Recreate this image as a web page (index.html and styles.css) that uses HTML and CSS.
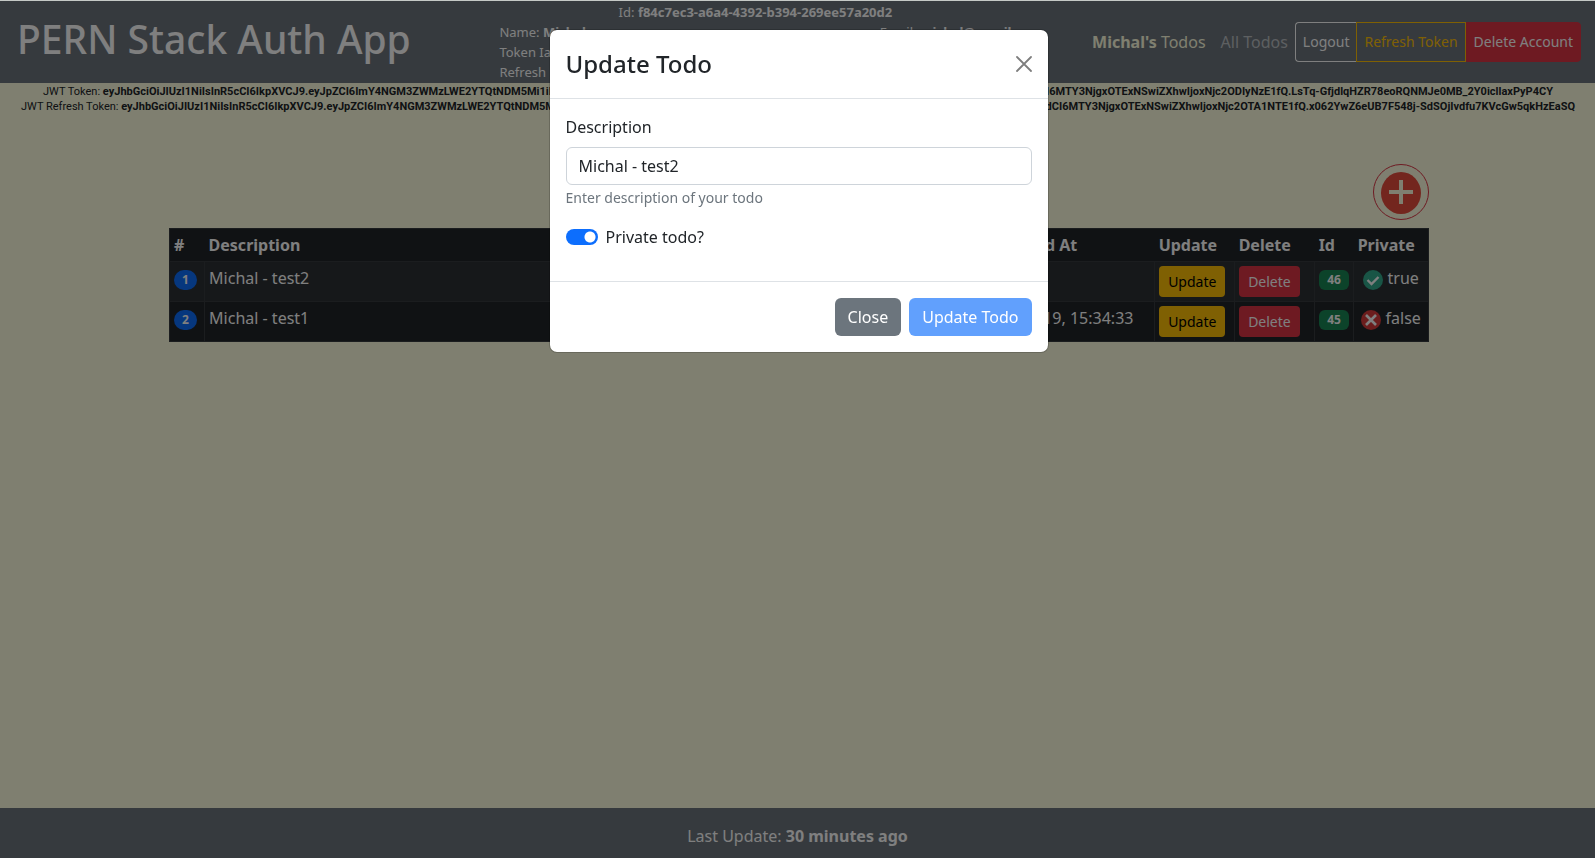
FILE: index.html
```html
<!DOCTYPE html>
<html lang="en">
<head>
<meta charset="utf-8">
<title>PERN Stack Auth App</title>
<link rel="stylesheet" href="styles.css">
</head>
<body>
<div class="page">
  <header class="header">
    <h1 class="brand">PERN Stack Auth App</h1>
    <div class="info">
      <div class="info-id">Id: <b>f84c7ec3-a6a4-4392-b394-269ee57a20d2</b></div>
      <div>Name: <b>Michal</b></div>
      <div>Email: <b>michal@gmail</b></div>
      <div class="info-wide">Token Iat:</div>
      <div class="info-wide">Refresh</div>
    </div>
    <nav class="nav">
      <a class="nav-link active" href="#"><b>Michal's</b> Todos</a>
      <a class="nav-link" href="#">All Todos</a>
      <div class="btn-group">
        <button type="button" class="group-btn logout">Logout</button>
        <button type="button" class="group-btn refresh">Refresh Token</button>
        <button type="button" class="group-btn remove">Delete Account</button>
      </div>
    </nav>
  </header>

  <section class="tokens">
    <div class="token access">
      <span>JWT Token: <b>eyJhbGciOiJIUzI1NiIsInR5cCI6IkpXVCJ9.eyJpZCI6ImY4NGM3ZWMzLWE2YTQtNDM5Mi1iMzk0</b></span>
      <b>iaWF0CI6MTY3NjgxOTExNSwiZXhwIjoxNjc2ODIyNzE1fQ.LsTq-GfjdlqHZR78eoRQNMJe0MB_2Y0icllaxPyP4CY</b>
    </div>
    <div class="token">
      <span>JWT Refresh Token: <b>eyJhbGciOiJIUzI1NiIsInR5cCI6IkpXVCJ9.eyJpZCI6ImY4NGM3ZWMzLWE2YTQtNDM5Mi1iMzk0</b></span>
      <b>IjoiaWhdCI6MTY3NjgxOTExNSwiZXhwIjoxNjc2OTA1NTE1fQ.x062YwZ6eUB7F548j-SdSOjIvdfu7KVcGw5qkHzEaSQ</b>
    </div>
  </section>

  <main class="content">
    <button type="button" class="add" aria-label="Add todo">
      <svg width="40" height="42" viewBox="0 0 40 42" aria-hidden="true">
        <ellipse cx="20" cy="21" rx="20" ry="21" fill="#e74c3c"/>
        <path d="M18 8h4v10h10v4H22v10h-4V22H8v-4h10z" fill="#ffffe0"/>
      </svg>
    </button>
    <table class="todos">
      <colgroup><col class="c-num"><col><col class="c-date"><col class="c-date"><col class="c-act"><col class="c-act"><col class="c-id"><col class="c-priv"></colgroup>
      <thead>
        <tr><th>#</th><th>Description</th><th>Created At</th><th>Updated At</th><th>Update</th><th>Delete</th><th>Id</th><th>Private</th></tr>
      </thead>
      <tbody>
        <tr>
          <td><span class="badge pill">1</span></td>
          <td>Michal - test2</td>
          <td></td>
          <td></td>
          <td><button type="button" class="btn-sm warn">Update</button></td>
          <td><button type="button" class="btn-sm danger">Delete</button></td>
          <td><span class="badge green">46</span></td>
          <td class="private"><svg width="20" height="20" viewBox="0 0 20 20" aria-hidden="true"><circle cx="10" cy="10" r="10" fill="#32aa8c"/><path d="M4.500 10l4 4 7-7" fill="none" stroke="#fff" stroke-width="2.400"/></svg> true</td>
        </tr>
        <tr>
          <td><span class="badge pill">2</span></td>
          <td>Michal - test1</td>
          <td></td>
          <td>2023-2-19, 15:34:33</td>
          <td><button type="button" class="btn-sm warn">Update</button></td>
          <td><button type="button" class="btn-sm danger">Delete</button></td>
          <td><span class="badge green">45</span></td>
          <td class="private"><svg width="20" height="20" viewBox="0 0 20 20" aria-hidden="true"><circle cx="10" cy="10" r="10" fill="#d63a3a"/><path d="M5 5l10 10M15 5L5 15" fill="none" stroke="#fff" stroke-width="2.600"/></svg> false</td>
        </tr>
      </tbody>
    </table>
  </main>

  <footer class="footer">Last Update: <b>30 minutes ago</b></footer>
</div>

<div class="backdrop"></div>
<div class="overlay">
  <form class="modal" role="dialog" aria-labelledby="modal-title">
    <div class="modal-header">
      <h2 class="modal-title" id="modal-title">Update Todo</h2>
      <button type="button" class="close" aria-label="Close dialog">
        <svg width="16" height="16" viewBox="0 0 16 16" aria-hidden="true"><path d="M1 1l14 14M15 1L1 15" fill="none" stroke="#000" stroke-width="1.800" stroke-linecap="round"/></svg>
      </button>
    </div>
    <div class="modal-body">
      <label class="label" for="description">Description</label>
      <input class="text" id="description" type="text" value="Michal - test2">
      <div class="hint">Enter description of your todo</div>
      <div class="check">
        <input class="switch" id="private" type="checkbox" role="switch" checked>
        <label for="private">Private todo?</label>
      </div>
    </div>
    <div class="modal-footer">
      <button type="button" class="btn secondary">Close</button>
      <button type="submit" class="btn primary" disabled>Update Todo</button>
    </div>
  </form>
</div>
</body>
</html>
```
FILE: styles.css
```css
* { box-sizing: border-box; }
body {
  margin: 0;
  background: #ffffe0;
  color: #212529;
  font: 16px/24px "Noto Sans", sans-serif;
}
button, input { font: inherit; margin: 0; }
h1, h2 { margin: 0; }
svg { display: block; }

.page {
  min-height: 100vh;
  display: flex;
  flex-direction: column;
  border-top: 1px solid #c5c9c6;
}
.header {
  display: flex;
  align-items: center;
  justify-content: space-between;
  padding: 1px 14px 1px 17px;
  background: #6c757d;
  color: #fff;
  white-space: nowrap;
}
.brand { font-size: 39px; line-height: 48px; font-weight: 500; padding-bottom: 6px; }
.info {
  display: grid;
  grid-template-columns: 3fr 1fr;
  width: 512px;
  margin-left: 8px;
  font-size: 13px;
  line-height: 20px;
}
.info-id { grid-column: 1 / -1; text-align: center; }
.info-wide { grid-column: 1 / -1; }
.nav { display: flex; align-items: center; gap: 15px; }
.nav-link { color: rgba(255, 255, 255, .55); text-decoration: none; }
.nav-link.active { color: #ffffe0; }
.btn-group { display: flex; margin-left: -8px; }
.group-btn {
  height: 40px;
  padding: 0 7px;
  border: 1px solid #fff;
  background: transparent;
  color: #fff;
  font-size: 14px;
}
.logout { border-radius: 4px 0 0 4px; border-right: 0; }
.refresh { border-color: #ffc107; color: #ffc107; }
.remove { border-color: #dc3545; background: #dc3545; border-radius: 0 4px 4px 0; }

.tokens { font: 11px/15px Roboto, sans-serif; padding: 1px 20px 0 21px; }
.token { display: flex; justify-content: space-between; white-space: nowrap; }
.access { padding: 0 22px; }

.content {
  width: 79%;
  margin: 50px 10.400% 0 auto;
  display: flex;
  flex-direction: column;
  flex: 1;
}
.add {
  align-self: flex-end;
  display: grid;
  place-items: center;
  width: 56px;
  height: 56px;
  margin-bottom: 8px;
  padding: 2px 0 0;
  border: 1px solid #dc3545;
  border-radius: 50%;
  background: none;
}
.todos {
  width: 100%;
  table-layout: fixed;
  border-collapse: collapse;
  background: #212529;
  color: #fff;
  border: 1px solid #373b3e;
}
.c-num { width: 35px; }
.c-date { width: 172px; }
.c-act { width: 80px; }
.c-id { width: 39px; }
.c-priv { width: 75px; }
.todos th { padding: 4px; text-align: left; font-weight: 700; white-space: nowrap; }
.todos td {
  height: 40px;
  padding: 4px;
  border: 1px solid #373b3e;
  vertical-align: top;
  white-space: nowrap;
}
.todos tbody tr:first-child { background: #2c3034; }
.badge {
  display: inline-block;
  padding: 4px 7px;
  font-size: 12px;
  line-height: 12px;
  font-weight: 700;
  border-radius: 6px;
  vertical-align: middle;
}
.pill { padding: 4px 8px; border-radius: 10px; background: #0d6efd; }
.green { padding: 4px 8px; background: #198754; }
.btn-sm {
  display: block;
  padding: 4px 8px;
  border: 1px solid transparent;
  border-radius: 4px;
  font-size: 14px;
  line-height: 21px;
}
.warn { background: #ffc107; color: #000; }
.danger { background: #dc3545; color: #fff; }
.todos .private { text-align: center; }
.private svg { display: inline-block; vertical-align: middle; }

.footer {
  padding: 16px 0 10px;
  background: #6c757d;
  color: #fff;
  text-align: center;
}

.backdrop { position: fixed; inset: 1px 0 0; background: rgba(0, 0, 0, .5); }
.overlay { position: fixed; inset: 0; padding: 29px 14px 29px 16px; }
.modal {
  max-width: 500px;
  margin: 0 auto;
  border: 1px solid rgba(0, 0, 0, .175);
  border-radius: 8px;
  background: #fff;
  background-clip: padding-box;
}
.modal-header {
  display: flex;
  align-items: center;
  justify-content: space-between;
  padding: 16px;
  border-bottom: 1px solid #dee2e6;
}
.modal-title { font-size: 24px; line-height: 36px; font-weight: 500; }
.close { padding: 0; border: 0; background: none; opacity: .5; }
.modal-body { padding: 16px 16px 32px; }
.label { display: block; margin-bottom: 8px; }
.text {
  display: block;
  width: 100%;
  height: 38px;
  padding: 6px 12px;
  border: 1px solid #ced4da;
  border-radius: 6px;
  background: #fff;
  color: #212529;
}
.hint { margin: 2px 0 17px; color: #6c757d; font-size: 14px; line-height: 21px; }
.check { display: flex; align-items: center; gap: 8px; }
.switch {
  appearance: none;
  width: 32px;
  height: 16px;
  border-radius: 8px;
  background: radial-gradient(circle at 24px 8px, #fff 5px, #0d6efd 6px);
}
.modal-footer {
  display: flex;
  justify-content: flex-end;
  gap: 8px;
  padding: 16px;
  border-top: 1px solid #dee2e6;
}
.btn {
  padding: 6px 12px;
  border: 1px solid transparent;
  border-radius: 6px;
  color: #fff;
}
.secondary { background: #6c757d; }
.primary { background: #0d6efd; opacity: .65; }
```
